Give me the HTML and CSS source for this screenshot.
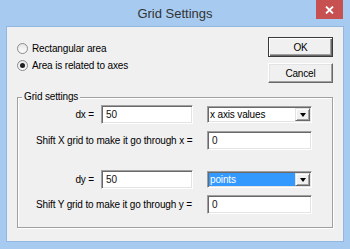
FILE: index.html
```html
<!DOCTYPE html>
<html lang="en">
<head>
  <meta charset="UTF-8" />
  <title>Grid Settings</title>
  <link rel="stylesheet" href="styles.css">
</head>
<body>
  <div class="window">
    <div class="titlebar">
      <div class="title">Grid Settings</div>
      <div class="close">
        <svg width="9" height="8" viewBox="0 0 9 8">
          <path d="M1 0.5 L8 7.5 M8 0.5 L1 7.5" stroke="#fff" stroke-width="1.8" fill="none"/>
        </svg>
      </div>
    </div>

    <div class="client">
      <div class="top">
        <div class="radios">
          <label class="radio"><span class="circle"></span>Rectangular area</label>
          <label class="radio"><span class="circle checked"></span>Area is related to axes</label>
        </div>
        <div class="buttons">
          <button class="btn default">OK</button>
          <button class="btn">Cancel</button>
        </div>
      </div>

      <fieldset class="group">
        <legend>Grid settings</legend>

        <div class="axis">
          <label class="name">dx =</label>
          <input class="field" type="text" value="50" />
          <div class="combo"><span class="value">x axis values</span><span class="arrow"></span></div>
          <label class="shift">Shift X grid to make it go through x =</label>
          <input class="field last" type="text" value="0" />
        </div>

        <div class="axis second">
          <label class="name">dy =</label>
          <input class="field" type="text" value="50" />
          <div class="combo"><span class="value selected">points</span><span class="arrow"></span></div>
          <label class="shift">Shift Y grid to make it go through y =</label>
          <input class="field last" type="text" value="0" />
        </div>
      </fieldset>
    </div>
  </div>
</body>
</html>
```

FILE: styles.css
```css
* {
  box-sizing: border-box;
}
body {
  margin: 0;
  font-family: "Liberation Sans", Arial, sans-serif;
  font-size: 10px;
  letter-spacing: -0.15px;
  color: #000;
}
.window {
  width: 350px;
  height: 249px;
  background-color: #a7cbf0;
  padding: 0 6px 7px 6px;
  display: flex;
  flex-direction: column;
}
.titlebar {
  height: 26px;
  display: grid;
  grid-template-columns: 1fr auto 1fr;
  align-items: start;
}
.title {
  grid-column: 2;
  font-size: 13px;
  letter-spacing: 0;
  line-height: 27px;
  color: #333;
}
.close {
  grid-column: 3;
  justify-self: end;
  width: 27px;
  height: 19px;
  margin-right: 1px;
  background-color: #c75050;
  display: flex;
  align-items: center;
  justify-content: center;
}
.client {
  flex: 1;
  background-color: #f0f0f0;
  border: 1px solid #92b8e2;
  padding: 10px 10px 0 10px;
}
.top {
  display: flex;
  justify-content: space-between;
}
.radios {
  margin-top: 3px;
  display: flex;
  flex-direction: column;
}
.radio {
  display: flex;
  align-items: center;
  height: 17px;
  gap: 4px;
}
.circle {
  width: 11px;
  height: 11px;
  border-radius: 50%;
  border: 1px solid #8a8a8a;
  background: linear-gradient(#e6e6e6, #fdfdfd);
  display: flex;
  align-items: center;
  justify-content: center;
}
.circle.checked::after {
  content: "";
  width: 5px;
  height: 5px;
  border-radius: 50%;
  background-color: #1f1f1f;
}
.buttons {
  display: flex;
  flex-direction: column;
  gap: 6px;
}
.btn {
  width: 65px;
  height: 20px;
  padding: 0;
  font-family: inherit;
  font-size: 10px;
  letter-spacing: inherit;
  color: #000;
  background-color: #f0f0f0;
  border: 1px solid;
  border-color: #fff #696969 #696969 #fff;
  box-shadow: inset -1px -1px #a0a0a0, inset 1px 1px #e3e3e3;
}
.btn.default {
  border-color: #3a3a3a;
  box-shadow: inset 1px 1px #fff, inset -1px -1px #696969, inset -2px -2px #a0a0a0;
}
.group {
  margin: 8px 0 0 0;
  padding: 2px 0 13px 0;
  border: 1px solid #a0a0a0;
  box-shadow: inset 1px 1px #fff, 1px 1px #fff;
  min-width: 0;
}
.group legend {
  margin-left: 4px;
  padding: 0 2px;
  line-height: 12px;
  background-color: #f0f0f0;
}
.axis {
  display: grid;
  grid-template-columns: 83px 92px 14px 105px;
  grid-auto-rows: 19px;
  row-gap: 7px;
  align-items: center;
}
.axis.second {
  margin-top: 20px;
  row-gap: 6px;
}
.name {
  text-align: right;
  padding-right: 7px;
}
.shift {
  grid-column: 1 / 4;
  padding-left: 18px;
  white-space: nowrap;
}
.field {
  height: 19px;
  width: 100%;
  margin: 0;
  padding: 0 0 0 4px;
  font-family: inherit;
  font-size: 10px;
  color: #111;
  background-color: #fff;
  border: 1px solid;
  border-color: #a0a0a0 #fff #fff #a0a0a0;
  box-shadow: inset 1px 1px #696969, inset -1px -1px #e3e3e3;
  outline: none;
}
.field.last {
  grid-column: 4;
}
.combo {
  grid-column: 4;
  height: 17px;
  display: flex;
  background-color: #fff;
  border: 1px solid;
  border-color: #a0a0a0 #fff #fff #a0a0a0;
  box-shadow: inset 1px 1px #696969, inset -1px -1px #e3e3e3;
  padding: 1px;
}
.value {
  flex: 1;
  padding-left: 1px;
  line-height: 13px;
}
.value.selected {
  background-color: #3399ff;
  color: #fff;
}
.arrow {
  width: 15px;
  background-color: #f0f0f0;
  border: 1px solid;
  border-color: #e3e3e3 #696969 #696969 #e3e3e3;
  box-shadow: inset 1px 1px #fff, inset -1px -1px #a0a0a0;
  display: flex;
  align-items: center;
  justify-content: center;
}
.arrow::after {
  content: "";
  border-left: 3.5px solid transparent;
  border-right: 3.5px solid transparent;
  border-top: 4px solid #000;
}
```
